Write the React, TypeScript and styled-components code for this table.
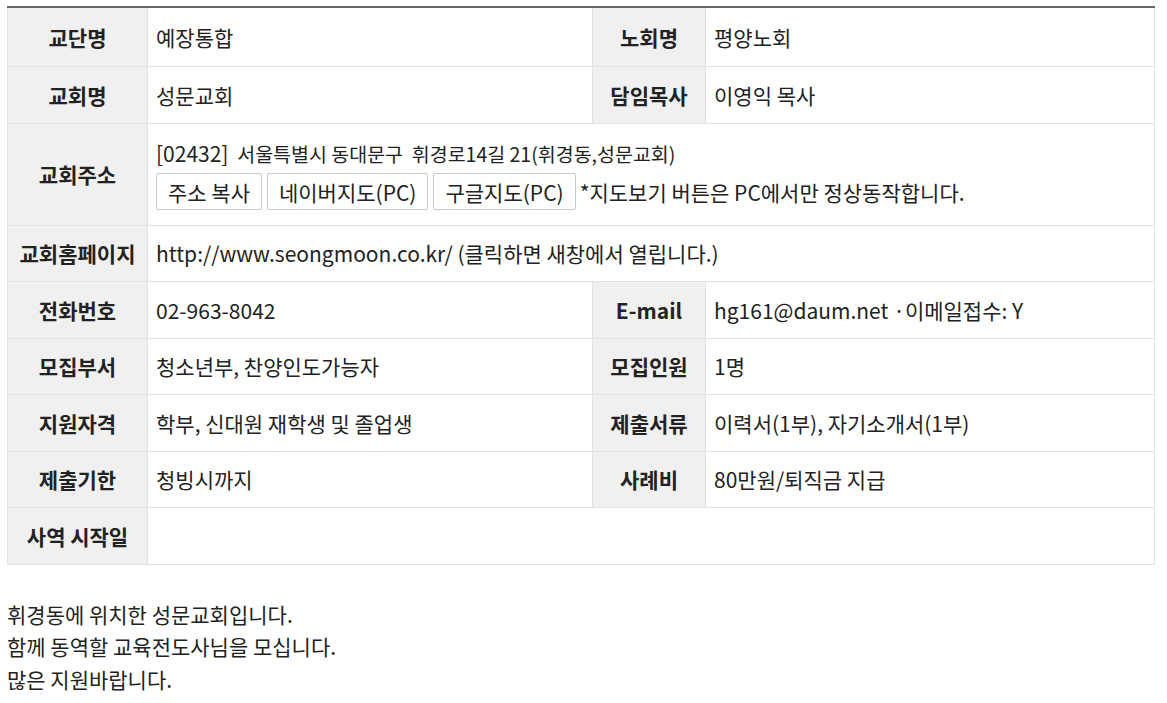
import { styled, createGlobalStyle } from 'styled-components';

const GlobalStyle = createGlobalStyle`
  html, body {
    margin: 0;
    padding: 0;
    background: #fff;
  }
  body {
    font-family: "Noto Sans CJK KR", "Noto Sans", sans-serif;
    color: #222;
  }
`;

type Row = {
  label: string;
  value: string;
  label2?: string;
  value2?: string;
};

const topRows: Row[] = [
  { label: '교단명', value: '예장통합', label2: '노회명', value2: '평양노회' },
  { label: '교회명', value: '성문교회', label2: '담임목사', value2: '이영익 목사' },
];

const bottomRows: Row[] = [
  { label: '전화번호', value: '02-963-8042', label2: 'E-mail', value2: 'hg161@daum.net ·이메일접수: Y' },
  { label: '모집부서', value: '청소년부, 찬양인도가능자', label2: '모집인원', value2: '1명' },
  { label: '지원자격', value: '학부, 신대원 재학생 및 졸업생', label2: '제출서류', value2: '이력서(1부), 자기소개서(1부)' },
  { label: '제출기한', value: '청빙시까지', label2: '사례비', value2: '80만원/퇴직금 지급' },
];

const mapButtons = ['주소 복사', '네이버지도(PC)', '구글지도(PC)'];

function InfoRow({ label, value, label2, value2 }: Row) {
  return (
    <tr>
      <Th>{label}</Th>
      {label2 ? (
        <>
          <Td>{value}</Td>
          <Th>{label2}</Th>
          <Td>{value2}</Td>
        </>
      ) : (
        <Td colSpan={3}>{value}</Td>
      )}
    </tr>
  );
}

export default function App() {
  return (
    <Page>
      <GlobalStyle />
      <Table>
        <colgroup>
          <col style={{ width: 140 }} />
          <col style={{ width: 445 }} />
          <col style={{ width: 113 }} />
          <col />
        </colgroup>
        <tbody>
          {topRows.map(row => (
            <InfoRow key={row.label} {...row} />
          ))}
          <tr>
            <Th>교회주소</Th>
            <AddressCell colSpan={3}>
              <AddressLine>
                [02432] <AddressText>서울특별시 동대문구 &nbsp;휘경로14길 21(휘경동,성문교회)</AddressText>
              </AddressLine>
              <ButtonRow>
                {mapButtons.map(label => (
                  <MapButton key={label} type="button">
                    {label}
                  </MapButton>
                ))}
                <Notice>*지도보기 버튼은 PC에서만 정상동작합니다.</Notice>
              </ButtonRow>
            </AddressCell>
          </tr>
          <InfoRow label="교회홈페이지" value="http://www.seongmoon.co.kr/ (클릭하면 새창에서 열립니다.)" />
          {bottomRows.map(row => (
            <InfoRow key={row.label} {...row} />
          ))}
          <InfoRow label="사역 시작일" value="" />
        </tbody>
      </Table>
      <Description>
        <p>휘경동에 위치한 성문교회입니다.</p>
        <p>함께 동역할 교육전도사님을 모십니다.</p>
        <p>많은 지원바랍니다.</p>
      </Description>
    </Page>
  );
}

const Page = styled.div`
  width: 1148px;
  padding: 6px 0 0 7px;
`;

const Table = styled.table`
  width: 100%;
  border-collapse: collapse;
  table-layout: fixed;
  border-top: 2px solid #666;
  font-size: 21px;

  tr:first-child > * {
    height: 58px;
  }
`;

const Th = styled.th`
  height: 55.5px;
  padding: 0;
  background: #f0f0f0;
  border: 1px solid #e2e2e2;
  border-top: none;
  color: #222;
  font-size: 21px;
  font-weight: 700;
  text-align: center;
  white-space: nowrap;
`;

const Td = styled.td`
  height: 55.5px;
  padding: 0 8px;
  border: 1px solid #e2e2e2;
  border-top: none;
  color: #222;
  font-weight: 400;
  white-space: nowrap;
`;

const AddressCell = styled(Td)`
  height: 100px;
  padding: 1px 8px 0;
`;

const AddressLine = styled.div`
  line-height: 28px;
`;

const AddressText = styled.span`
  font-size: 19.5px;
  margin-left: 4px;
`;

const ButtonRow = styled.div`
  display: flex;
  align-items: center;
  gap: 5px;
  margin-top: 5px;
`;

const MapButton = styled.button`
  height: 37px;
  padding: 0 11px;
  border: 1px solid #c8c8c8;
  border-radius: 2px;
  background: #fff;
  color: #222;
  font-family: inherit;
  font-size: 21px;
`;

const Notice = styled.span`
  margin-left: -1px;
`;

const Description = styled.div`
  margin-top: 33px;
  font-size: 21px;
  line-height: 32.5px;
  color: #222;

  p {
    margin: 0;
  }
`;
